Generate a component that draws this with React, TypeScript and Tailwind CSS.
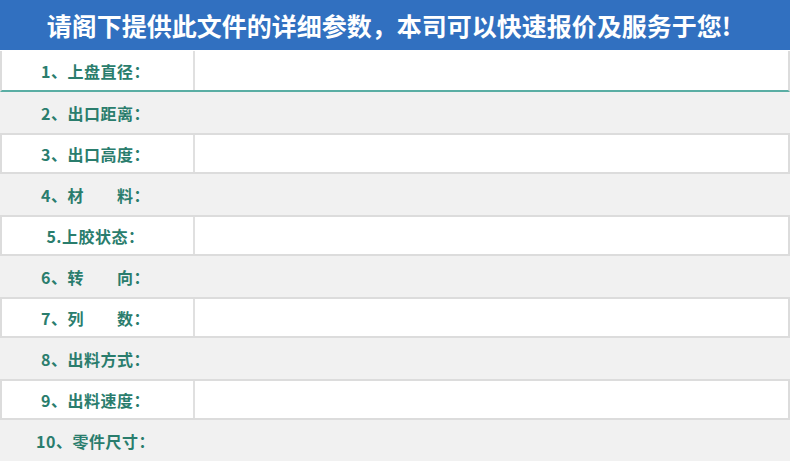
const rows = [
  { label: "1、上盘直径：", white: true },
  { label: "2、出口距离：", white: false },
  { label: "3、出口高度：", white: true },
  { label: "4、材\u3000\u3000料：", white: false },
  { label: "5.上胶状态：", white: true },
  { label: "6、转\u3000\u3000向：", white: false },
  { label: "7、列\u3000\u3000数：", white: true },
  { label: "8、出料方式：", white: false },
  { label: "9、出料速度：", white: true },
  { label: "10、零件尺寸：", white: false },
];

export default function App() {
  return (
    <div
      className="w-[790px] h-[461px] overflow-hidden bg-white"
      style={{ fontFamily: '"Noto Sans CJK SC", "Noto Sans", sans-serif' }}
    >
      <div className="h-[50px] bg-[#3170c0] flex items-center justify-center pr-3">
        <h1 className="text-[25px] font-bold text-white leading-none">
          请阁下提供此文件的详细参数，本司可以快速报价及服务于您!
        </h1>
      </div>
      <div className="pt-px">
        {rows.map((r, i) => (
          <div
            key={i}
            className={
              r.white
                ? i === 0
                  ? "flex h-[41px] bg-white border-x-2 border-x-[#dcdcdc] border-b-2 border-b-[#5aaea4]"
                  : "flex h-[41px] bg-white border-x-2 border-x-[#dcdcdc] border-t-2 border-t-[#dcdcdc] border-b-2 border-b-[#dcdcdc]"
                : "flex h-[41px] bg-[#f1f1f1]"
            }
          >
            <div
              className={
                r.white
                  ? "w-[193px] border-r-2 border-r-[#e0e0e0] flex items-center justify-center pr-1 text-[16px] font-semibold tracking-[0.5px] text-[#2a7d6d]"
                  : "w-[195px] flex items-center justify-center pr-1 text-[16px] font-semibold tracking-[0.5px] text-[#2a7d6d]"
              }
            >
              {r.label}
            </div>
            <div className="flex-1" />
          </div>
        ))}
      </div>
    </div>
  );
}
